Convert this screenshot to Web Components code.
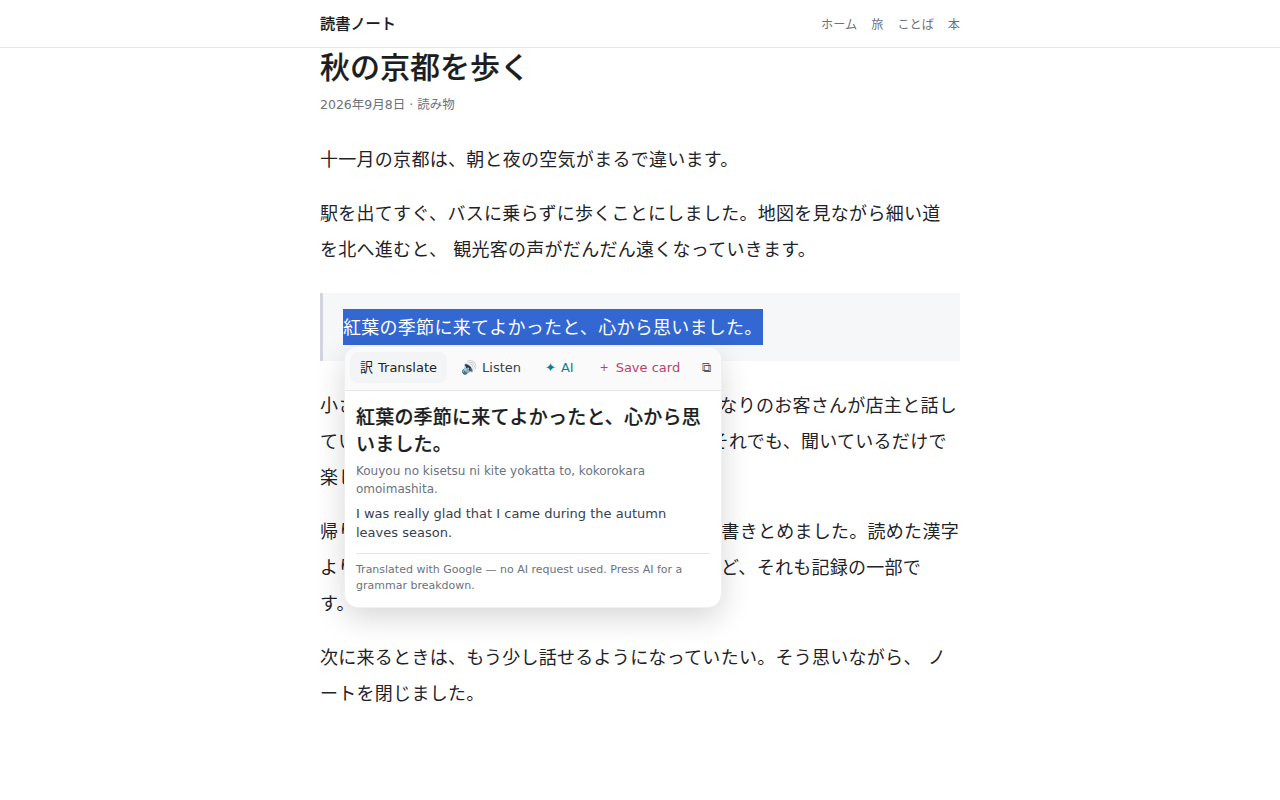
<!DOCTYPE html>
<html lang="ja">
<head>
<meta charset="utf-8">
<title>読書ノート</title>
<style>
  html, body { margin: 0; background: #fff; }
  body {
    font-family: "DejaVu Sans", "Noto Sans CJK JP", sans-serif;
    color: #1f2328;
  }
</style>
</head>
<body>

<site-header brand="読書ノート">
  <a href="#">ホーム</a>
  <a href="#">旅</a>
  <a href="#">ことば</a>
  <a href="#">本</a>
</site-header>

<reading-article heading="秋の京都を歩く" meta="2026年9月8日 · 読み物">
  <p>十一月の京都は、朝と夜の空気がまるで違います。</p>
  <p>駅を出てすぐ、バスに乗らずに歩くことにしました。地図を見ながら細い道 を北へ進むと、 観光客の声がだんだん遠くなっていきます。</p>
  <quote-block>
    <span class="picked">紅葉の季節に来てよかったと、心から思いました。</span>
    <selection-popup slot="popup"
      original="紅葉の季節に来てよかったと、心から思いました。"
      reading="Kouyou no kisetsu ni kite yokatta to, kokorokara omoimashita."
      translation="I was really glad that I came during the autumn leaves season."
      note="Translated with Google — no AI request used. Press AI for a grammar breakdown."></selection-popup>
  </quote-block>
  <p>小さな古本屋に入って旅の本を探していると、となりのお客さんが店主と話していました。京都の言葉は、&ensp;まだ難しいです。それでも、聞いているだけで 楽しい時間でした。</p>
  <p>帰りの電車の中で、今日覚えた言葉を旅ノートに書きとめました。読めた漢字より、読めなかった漢字のほうがずっと多いけれど、それも記録の一部で す。</p>
  <p>次に来るときは、もう少し話せるようになっていたい。そう思いながら、 ノートを閉じました。</p>
</reading-article>

<script>
class SiteHeader extends HTMLElement {
    constructor() {
        super()
        this.attachShadow({ mode: 'open' })
        this.shadowRoot.innerHTML = `
            <style>
                :host {
                    display: block;
                    height: 47px;
                    border-bottom: 1px solid #e5e7eb;
                    background: #fff;
                }
                .inner {
                    width: 640px;
                    height: 100%;
                    margin: 0 auto;
                    display: flex;
                    align-items: center;
                    justify-content: space-between;
                }
                .brand {
                    font-size: 15.2px;
                    font-weight: 500;
                    -webkit-text-stroke: 0.2px #1a1d21;
                    color: #1a1d21;
                    padding-bottom: 4px;
                }
                nav {
                    display: flex;
                    gap: 14px;
                    font-size: 12.16px;
                }
                ::slotted(a) {
                    color: #6b7280;
                    text-decoration: none;
                }
            </style>
            <div class="inner">
                <span class="brand"></span>
                <nav><slot></slot></nav>
            </div>
        `
    }

    connectedCallback() {
        this.shadowRoot.querySelector('.brand').textContent = this.getAttribute('brand')
    }
}

class ReadingArticle extends HTMLElement {
    constructor() {
        super()
        this.attachShadow({ mode: 'open' })
        this.shadowRoot.innerHTML = `
            <style>
                :host {
                    display: block;
                    width: 640px;
                    margin: 0 auto;
                }
                h1 {
                    margin: 0;
                    padding-top: 1px;
                    font-size: 30px;
                    line-height: 38px;
                    font-weight: 500;
                    -webkit-text-stroke: 0.2px #1a1d21;
                    color: #1a1d21;
                }
                .meta {
                    margin: 8px 0 27px;
                    font-size: 12.5px;
                    line-height: 20px;
                    color: #6b7280;
                }
                ::slotted(p) {
                    margin: 0 0 18px;
                    font-size: 18px;
                    letter-spacing: 0.276px;
                    line-height: 36px;
                }
            </style>
            <h1></h1>
            <div class="meta"></div>
            <slot></slot>
        `
    }

    connectedCallback() {
        this.shadowRoot.querySelector('h1').textContent = this.getAttribute('heading')
        this.shadowRoot.querySelector('.meta').textContent = this.getAttribute('meta')
    }
}

class QuoteBlock extends HTMLElement {
    constructor() {
        super()
        this.attachShadow({ mode: 'open' })
        this.shadowRoot.innerHTML = `
            <style>
                :host {
                    display: block;
                    position: relative;
                    margin: 25px 0 27px;
                    padding: 16px 20px;
                    border-left: 3px solid #d1d5db;
                    background: #f6f7f9;
                    font-size: 18px;
                    letter-spacing: 0.276px;
                    line-height: 36px;
                }
                ::slotted(.picked) {
                    display: inline-block;
                    vertical-align: top;
                    padding-top: 1px;
                    line-height: 35px;
                    background: #3367d1;
                    color: #fff;
                }
            </style>
            <slot></slot>
            <slot name="popup"></slot>
        `
    }
}

class SelectionPopup extends HTMLElement {
    constructor() {
        super()
        this.attachShadow({ mode: 'open' })
        this.shadowRoot.innerHTML = `
            <style>
                :host {
                    display: block;
                    position: absolute;
                    left: 21px;
                    top: 53px;
                    width: 378px;
                    box-sizing: border-box;
                    z-index: 10;
                    background: #fff;
                    border: 1px solid #f0f0f2;
                    border-radius: 14px;
                    box-shadow: 0 10px 30px rgba(0, 0, 0, 0.16);
                    overflow: hidden;
                    color: #1f2328;
                    letter-spacing: normal;
                    line-height: normal;
                }
                .tools {
                    display: flex;
                    align-items: flex-start;
                    gap: 4px;
                    height: 44px;
                    box-sizing: border-box;
                    padding: 5px 5px 0;
                    background: #fafafa;
                    border-bottom: 1px solid #e5e7eb;
                    font-size: 13px;
                    line-height: 18px;
                }
                button {
                    all: unset;
                    height: 31px;
                    padding: 0 10px;
                    border-radius: 8px;
                    display: flex;
                    align-items: center;
                    gap: 5px;
                    white-space: nowrap;
                    color: #374151;
                }
                button.on { background: #f3f4f6; color: #1f2328; }
                button.ai { color: #0f7f8f; }
                button.save { color: #b8446c; }
                button.save .plus { width: 13px; font-size: 11px; text-align: center; }
                button.copy { padding: 0 8px; color: #555b66; }
                .body { padding: 13px 11px 13px 11px; }
                .original {
                    font-size: 19px;
                    letter-spacing: 0.2px;
                    line-height: 27px;
                    font-weight: 500;
                    -webkit-text-stroke: 0.2px #1a1d21;
                    color: #1a1d21;
                }
                .reading {
                    margin-top: 4px;
                    font-size: 12px;
                    line-height: 18px;
                    color: #6b7280;
                }
                .translation {
                    margin-top: 6px;
                    font-size: 13px;
                    line-height: 19px;
                    color: #374151;
                }
                .note {
                    margin-top: 11px;
                    padding-top: 8px;
                    border-top: 1px solid #e5e7eb;
                    font-size: 11px;
                    line-height: 16px;
                    color: #6b7280;
                }
            </style>
            <div class="tools">
                <button class="on"><span>訳</span><span>Translate</span></button>
                <button><span>🔊</span><span>Listen</span></button>
                <button class="ai"><span>✦</span><span>AI</span></button>
                <button class="save"><span class="plus">+</span><span>Save card</span></button>
                <button class="copy"><span>⧉</span></button>
            </div>
            <div class="body">
                <div class="original"></div>
                <div class="reading"></div>
                <div class="translation"></div>
                <div class="note"></div>
            </div>
        `
    }

    connectedCallback() {
        for (const name of ['original', 'reading', 'translation', 'note']) {
            this.shadowRoot.querySelector('.' + name).textContent = this.getAttribute(name)
        }
    }
}

customElements.define('site-header', SiteHeader)
customElements.define('reading-article', ReadingArticle)
customElements.define('quote-block', QuoteBlock)
customElements.define('selection-popup', SelectionPopup)
</script>
</body>
</html>
